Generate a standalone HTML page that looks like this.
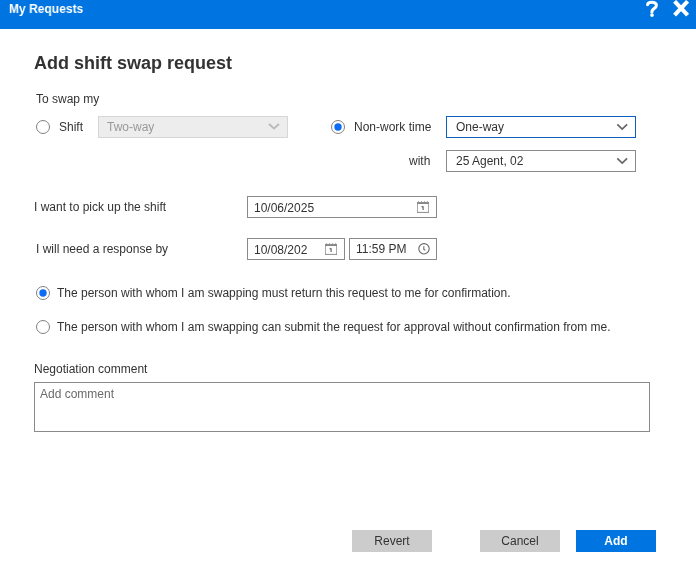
<!DOCTYPE html>
<html><head><meta charset="utf-8">
<style>
*{box-sizing:border-box;margin:0;padding:0}
html,body{width:696px;height:564px;overflow:hidden;background:#fff;-webkit-font-smoothing:antialiased;font-family:"Liberation Sans",sans-serif;color:#333}
.abs{position:absolute}
body>*{will-change:transform}
#hdr{left:0;top:0;width:696px;height:29px;background:#0075e1}
#title{left:9px;top:1px;font-size:13px;transform-origin:0 0;transform:scaleX(0.925);font-weight:bold;color:#fff;line-height:16px}
h1{position:absolute;left:34px;top:53px;font-size:18px;font-weight:bold;color:#333;line-height:21px}
.lbl{position:absolute;font-size:12px;line-height:14px;color:#333;white-space:nowrap}
.radio{position:absolute;width:14px;height:14px}.radio svg{display:block}
.sel{position:absolute;height:22px;border:1px solid #8a8a8a;background:#fff;font-size:12px;line-height:20px;padding-left:9px;color:#333}
.sel svg{position:absolute;right:7px;top:6px}
.inp{position:absolute;height:22px;border:1px solid #8a8a8a;background:#fff;font-size:12px;line-height:20px;padding-left:6px;color:#333}
.inp svg{position:absolute}
.btn{position:absolute;top:530px;width:80px;height:22px;font-size:12px;line-height:22px;text-align:center;color:#333;background:#ccc}
</style></head><body>
<div id="hdr" class="abs"></div>
<div id="title" class="abs">My Requests</div>
<svg class="abs" style="left:642px;top:0" width="20" height="20" viewBox="0 0 20 20"><path d="M5.6 4.6 C5.8 2.9 7.6 2.2 10 2.2 C12.6 2.2 14.4 3.4 14.4 5.3 C14.4 7.3 12.6 8.2 11.2 9.3 C10.2 10.1 9.9 10.8 9.9 12" fill="none" stroke="#fff" stroke-width="3.1" stroke-linecap="round"/><circle cx="10" cy="15.1" r="1.85" fill="#fff"/></svg>
<svg class="abs" style="left:673px;top:0" width="16" height="17" viewBox="0 0 16 17">
<path d="M1.6 1.3 L14.6 15.2 M14.6 1.3 L1.6 15.2" stroke="#fff" stroke-width="4.1"/>
</svg>

<h1>Add shift swap request</h1>
<div class="lbl" style="left:36px;top:92px">To swap my</div>

<div class="radio" style="left:36px;top:120px"><svg width="14" height="14" viewBox="0 0 14 14"><circle cx="7" cy="7" r="6.5" fill="#fff" stroke="#808080" stroke-width="1"/></svg></div>
<div class="lbl" style="left:59px;top:120px">Shift</div>
<div class="sel" style="left:98px;top:116px;width:190px;background:#ededed;border-color:#d6d6d6;color:#999;padding-left:8px">Two-way
<svg width="12" height="8" viewBox="0 0 12 8"><path d="M1 1 L6 5.5 L11 1" fill="none" stroke="#bbb" stroke-width="2"/></svg></div>

<div class="radio" style="left:331px;top:120px"><svg width="14" height="14" viewBox="0 0 14 14"><circle cx="7" cy="7" r="6.5" fill="#fff" stroke="#808080" stroke-width="1"/><circle cx="7" cy="7" r="3.7" fill="#0b6cf5"/></svg></div>
<div class="lbl" style="left:354px;top:120px">Non-work time</div>
<div class="sel" style="left:446px;top:116px;width:190px;border-color:#0a5fbf">One-way
<svg width="12" height="8" viewBox="0 0 12 8"><path d="M1.3 1.4 L6.2 6 L11.1 1.4" fill="none" stroke="#666" stroke-width="1.7"/></svg></div>

<div class="lbl" style="left:409px;top:154px">with</div>
<div class="sel" style="left:446px;top:150px;width:190px">25 Agent, 02
<svg width="12" height="8" viewBox="0 0 12 8"><path d="M1.3 1.4 L6.2 6 L11.1 1.4" fill="none" stroke="#666" stroke-width="1.7"/></svg></div>

<div class="lbl" style="left:34px;top:200px">I want to pick up the shift</div>
<div class="inp" style="left:247px;top:196px;width:190px;padding-top:1px">10/06/2025
<svg style="left:169px;top:4px" width="12" height="12" viewBox="0 0 12 12"><path d="M0.5 2.5 V11.5 M11.5 2.5 V11.5" stroke="#a8a8a8" stroke-width="1"/><path d="M0 11.4 H12" stroke="#8a8a8a" stroke-width="1"/><rect x="0" y="1.1" width="12" height="1.9" fill="#858585"/><circle cx="1.5" cy="1" r="0.7" fill="#888"/><circle cx="4.5" cy="1" r="0.7" fill="#888"/><circle cx="7.5" cy="1" r="0.7" fill="#888"/><circle cx="10.5" cy="1" r="0.7" fill="#888"/><path d="M6.1 5.2 V9 M4.6 5.9 L6.1 5.3" fill="none" stroke="#707070" stroke-width="1.25"/></svg></div>

<div class="lbl" style="left:36px;top:242px">I will need a response by</div>
<div class="inp" style="left:247px;top:238px;width:98px;padding-top:1px">10/08/202
<svg style="left:77px;top:4px" width="12" height="12" viewBox="0 0 12 12"><path d="M0.5 2.5 V11.5 M11.5 2.5 V11.5" stroke="#a8a8a8" stroke-width="1"/><path d="M0 11.4 H12" stroke="#8a8a8a" stroke-width="1"/><rect x="0" y="1.1" width="12" height="1.9" fill="#858585"/><circle cx="1.5" cy="1" r="0.7" fill="#888"/><circle cx="4.5" cy="1" r="0.7" fill="#888"/><circle cx="7.5" cy="1" r="0.7" fill="#888"/><circle cx="10.5" cy="1" r="0.7" fill="#888"/><path d="M6.1 5.2 V9 M4.6 5.9 L6.1 5.3" fill="none" stroke="#707070" stroke-width="1.25"/></svg></div>
<div class="inp" style="left:349px;top:238px;width:88px">11:59 PM
<svg style="left:68px;top:4px" width="13" height="13" viewBox="0 0 13 13"><circle cx="6" cy="5.8" r="5.2" fill="none" stroke="#666" stroke-width="1.1"/><path d="M5.8 3.2 V6.3 L7.2 7.2" fill="none" stroke="#777" stroke-width="1.2"/></svg></div>

<div class="radio" style="left:36px;top:286px"><svg width="14" height="14" viewBox="0 0 14 14"><circle cx="7" cy="7" r="6.5" fill="#fff" stroke="#808080" stroke-width="1"/><circle cx="7" cy="7" r="3.7" fill="#0b6cf5"/></svg></div>
<div class="lbl" style="left:57px;top:286px">The person with whom I am swapping must return this request to me for confirmation.</div>
<div class="radio" style="left:36px;top:320px"><svg width="14" height="14" viewBox="0 0 14 14"><circle cx="7" cy="7" r="6.5" fill="#fff" stroke="#808080" stroke-width="1"/></svg></div>
<div class="lbl" style="left:57px;top:320px">The person with whom I am swapping can submit the request for approval without confirmation from me.</div>

<div class="lbl" style="left:34px;top:362px">Negotiation comment</div>
<div class="abs" style="left:34px;top:382px;width:616px;height:50px;border:1px solid #8a8a8a"></div>
<div class="lbl" style="left:40px;top:387px;color:#6a6a6a">Add comment</div>

<div class="btn" style="left:352px">Revert</div>
<div class="btn" style="left:480px">Cancel</div>
<div class="btn" style="left:576px;background:#0075e1;color:#fff;font-weight:bold">Add</div>
</body></html>
